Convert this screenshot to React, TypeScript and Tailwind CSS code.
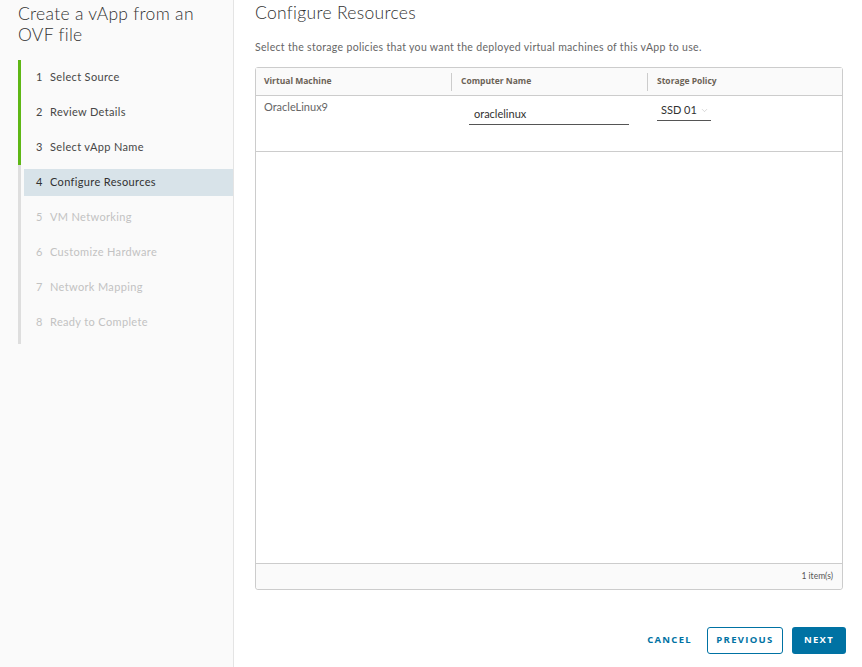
import { ChevronDown } from 'lucide-react';

const steps = [
  { n: 1, label: 'Select Source', state: 'done' },
  { n: 2, label: 'Review Details', state: 'done' },
  { n: 3, label: 'Select vApp Name', state: 'done' },
  { n: 4, label: 'Configure Resources', state: 'active' },
  { n: 5, label: 'VM Networking', state: 'todo' },
  { n: 6, label: 'Customize Hardware', state: 'todo' },
  { n: 7, label: 'Network Mapping', state: 'todo' },
  { n: 8, label: 'Ready to Complete', state: 'todo' },
];

export default function App() {
  return (
    <div className="flex w-[862px] h-[667px] bg-white font-['Lato',sans-serif] text-[#565656] overflow-hidden">
      {/* wizard nav */}
      <aside className="w-[234px] shrink-0 bg-[#fafafa] border-r border-[#e4e4e4]">
        <h1 className="pl-[18px] pr-4 pt-[3px] text-[17.5px] leading-[21px] font-light text-[#313131] tracking-[0.3px]">
          Create a vApp from an OVF file
        </h1>
        <nav className="mt-[15px] ml-[18px]">
          {steps.map((s, i) => {
            const bar =
              s.state === 'done' ? 'border-[#5eb715]' : 'border-[#dedede]';
            const text =
              s.state === 'done'
                ? 'text-[#474747]'
                : s.state === 'active'
                  ? 'text-[#313131]'
                  : 'text-[#c2c2c2]';
            return (
              <div
                key={s.n}
                className={`border-l-[3px] ${bar} pl-[3px] pt-[4px] ${i === steps.length - 1 ? 'pb-[8px]' : 'pb-[4px]'}`}
              >
                <div
                  className={`flex items-center h-[27px] pl-[12px] text-[11px] tracking-[0.35px] ${text} ${s.state === 'active' ? 'bg-[#d8e3e9]' : ''}`}
                >
                  <span className="w-[14px]">{s.n}</span>
                  <span>{s.label}</span>
                </div>
              </div>
            );
          })}
        </nav>
      </aside>

      {/* content */}
      <main className="flex-1 flex flex-col pl-[21px] pr-[16px]">
        <h2 className="pt-[3px] text-[17.5px] leading-[20px] font-light text-[#313131] tracking-[0.3px]">Configure Resources</h2>
        <p className="mt-[17px] text-[10.5px] leading-[14px] text-[#666] tracking-[0.32px]">
          Select the storage policies that you want the deployed virtual machines of this vApp to use.
        </p>

        <div className="mt-[13px] mr-[3px] h-[523px] flex flex-col border border-[#cccccc] rounded-[3px]">
          <div className="flex items-center h-[28px] border-b border-[#cccccc] bg-[#fafafa] text-[8.5px] font-bold text-[#6b6256] font-['Open_Sans',sans-serif]">
            <div className="w-[195px] pl-[8px]">Virtual Machine</div>
            <div className="w-[196px] h-[18px] flex items-center border-l border-[#cccccc] pl-[9px]">Computer Name</div>
            <div className="flex-1 h-[18px] flex items-center border-l border-[#cccccc] pl-[9px]">Storage Policy</div>
          </div>

          <div className="flex h-[56px] border-b border-[#cccccc] bg-white">
            <div className="w-[195px] pl-[8px] pt-[3px] text-[11px] text-[#666]">OracleLinux9</div>
            <div className="w-[196px] pl-[18px] pt-[9px]">
              <div className="w-[160px] h-[20px] border-b border-[#555] pl-[5px] flex items-center text-[11px] text-[#313131]">
                oraclelinux
              </div>
            </div>
            <div className="flex-1 pl-[10px] pt-[5px]">
              <div className="w-[54px] h-[20px] border-b border-[#555] pl-[4px] flex items-center gap-[3px] text-[11px] text-[#313131]">
                SSD 01
                <ChevronDown className="w-[9px] h-[9px] text-[#bbb]" strokeWidth={1.5} />
              </div>
            </div>
          </div>

          <div className="flex-1 bg-white" />

          <div className="h-[26px] flex items-center justify-end border-t border-[#cccccc] bg-[#fafafa] pr-[9px] text-[8.5px] text-[#565656] rounded-b-[3px]">
            1 item(s)
          </div>
        </div>

        <div className="mt-[37px] flex items-center justify-end text-[9.5px] font-bold tracking-[1.3px] font-['Open_Sans',sans-serif]">
          <button className="h-[27px] px-[3px] text-[#0072a3]">CANCEL</button>
          <button className="ml-[12px] h-[27px] w-[76px] rounded-[3px] border border-[#0072a3] text-[#0072a3] bg-white">PREVIOUS</button>
          <button className="ml-[9px] h-[27px] w-[54px] rounded-[3px] bg-[#0072a3] text-white">NEXT</button>
        </div>
      </main>
    </div>
  );
}
